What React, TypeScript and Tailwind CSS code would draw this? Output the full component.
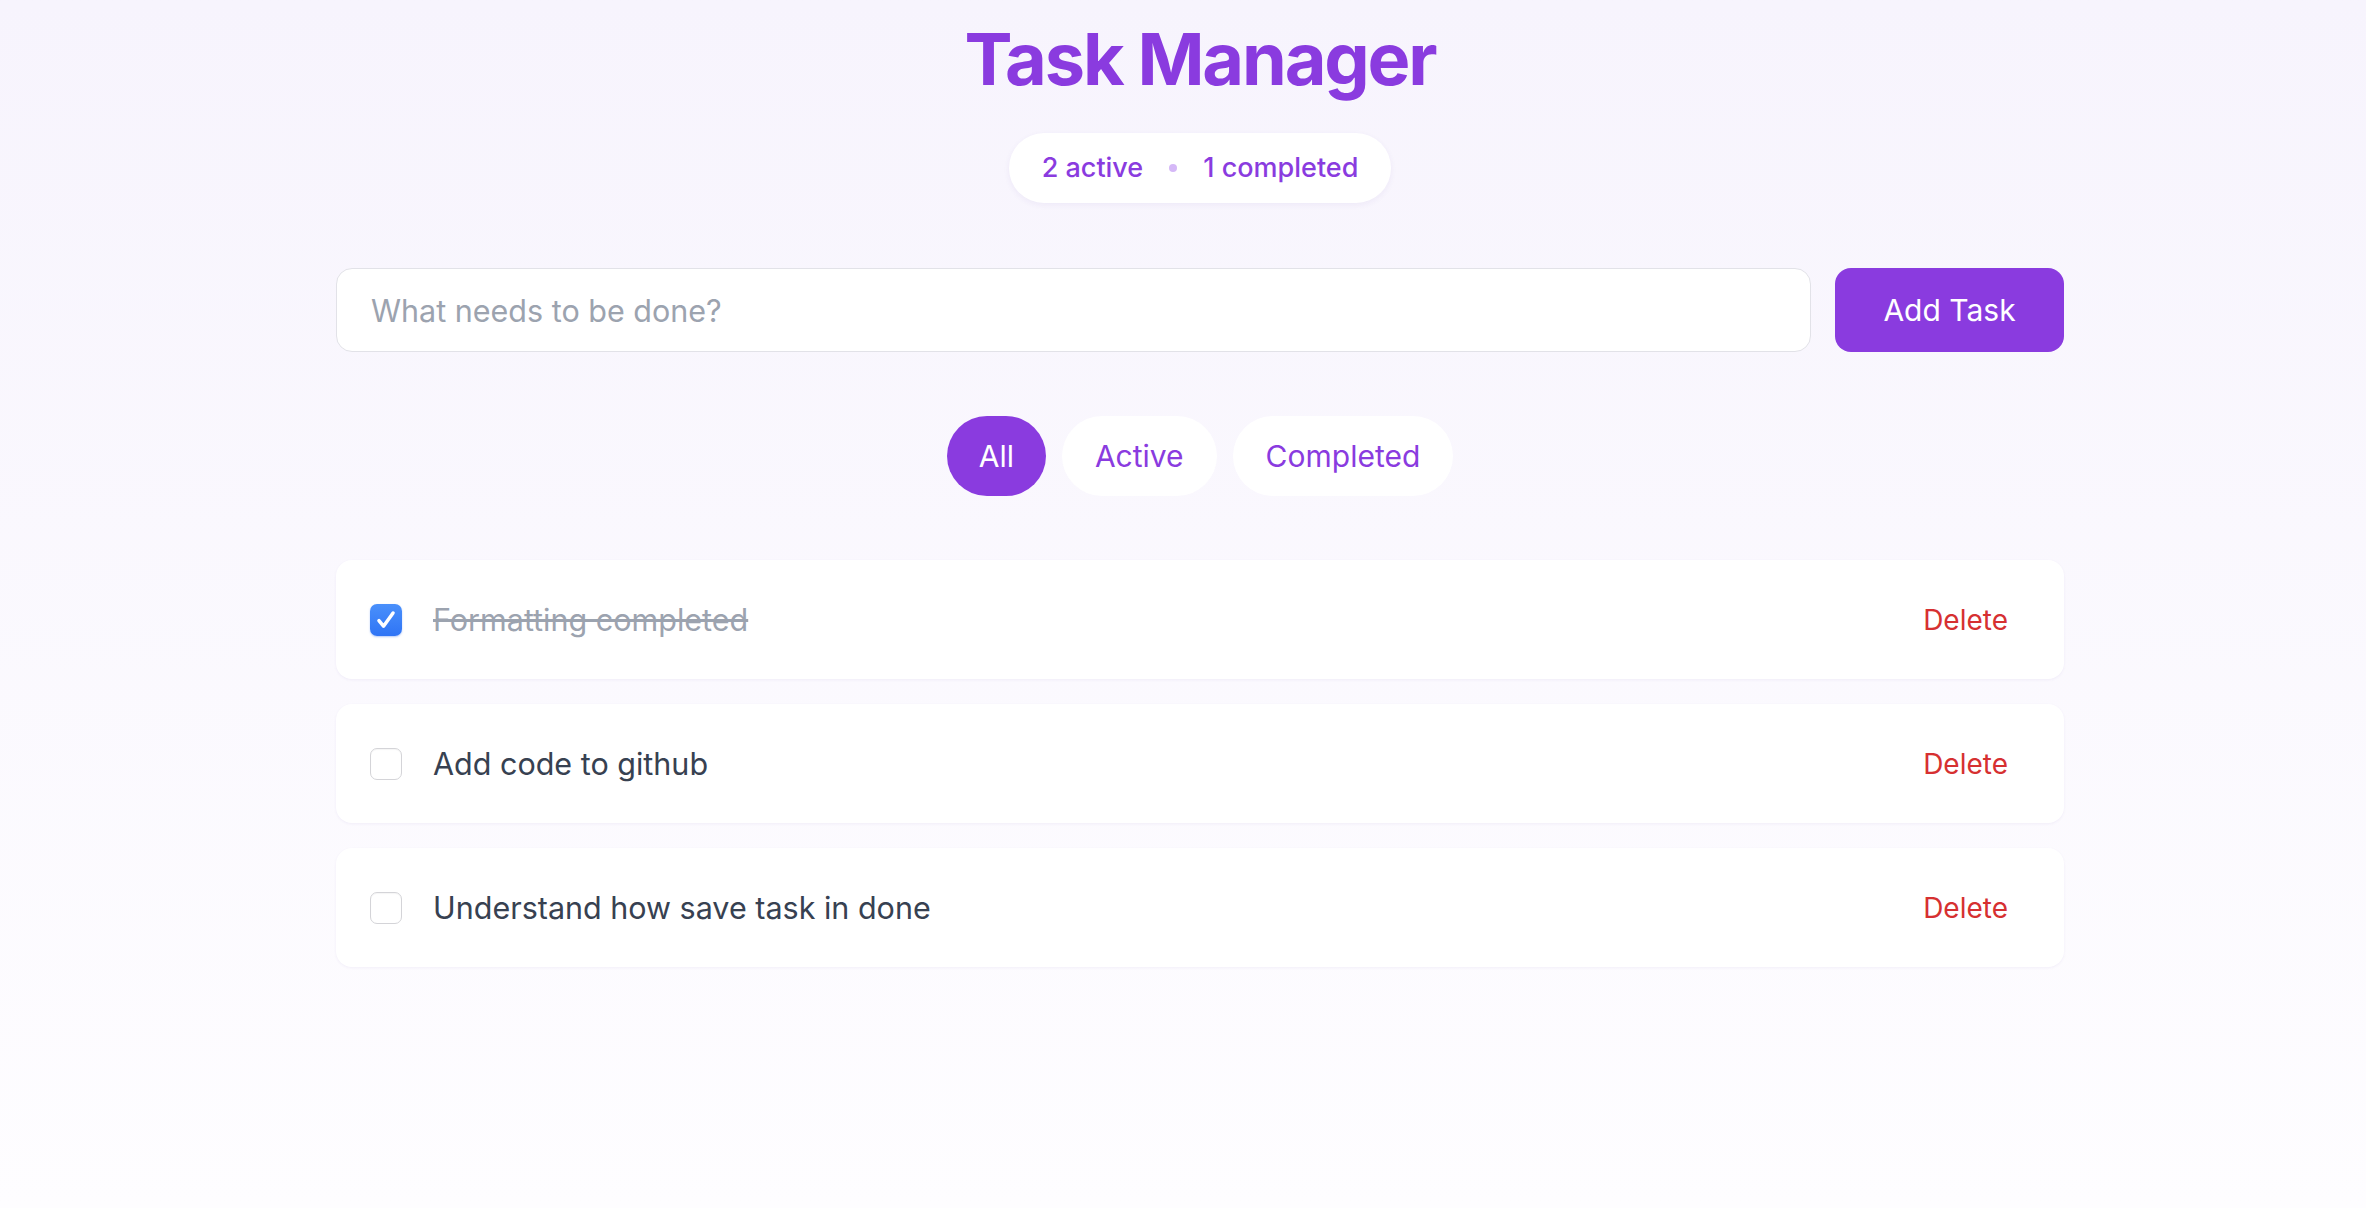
import { useState } from 'react';

type Task = {
  id: number;
  title: string;
  done: boolean;
};

type Filter = 'All' | 'Active' | 'Completed';

const initialTasks: Task[] = [
  { id: 1, title: 'Formatting completed', done: true },
  { id: 2, title: 'Add code to github', done: false },
  { id: 3, title: 'Understand how save task in done', done: false },
];

function Checkbox({ checked, onToggle }: { checked: boolean; onToggle: () => void }) {
  if (checked) {
    return (
      <button
        onClick={onToggle}
        className="flex h-[32px] w-[32px] shrink-0 items-center justify-center rounded-[7px] bg-linear-to-b from-[#4a90fb] to-[#2f74f5] shadow-[0_1px_2px_rgba(37,99,235,0.35)]"
      >
        <svg width="26" height="26" viewBox="0 0 24 24" fill="none">
          <path
            d="M5.5 12.5l4.2 5.2L18.5 5.5"
            stroke="white"
            strokeWidth="3.2"
            strokeLinecap="round"
            strokeLinejoin="round"
          />
        </svg>
      </button>
    );
  }
  return (
    <button
      onClick={onToggle}
      className="h-[32px] w-[32px] shrink-0 rounded-[7px] border border-[#d4d4d8] bg-white shadow-[inset_0_1px_1px_rgba(0,0,0,0.04)]"
    />
  );
}

function TaskItem({
  task,
  onToggle,
  onDelete,
}: {
  task: Task;
  onToggle: () => void;
  onDelete: () => void;
}) {
  return (
    <li className="flex h-[119px] items-center rounded-2xl bg-white pl-[34px] pr-[56px] shadow-[0_1px_3px_rgba(76,29,149,0.06)]">
      <Checkbox checked={task.done} onToggle={onToggle} />
      <span
        className={
          task.done
            ? 'ml-[31px] flex-1 text-[30.5px] text-[#9ca3af] line-through'
            : 'ml-[31px] flex-1 text-[30.5px] text-[#374151]'
        }
      >
        {task.title}
      </span>
      <button onClick={onDelete} className="text-[28px] text-[#d63031]">
        Delete
      </button>
    </li>
  );
}

export default function App() {
  const [tasks, setTasks] = useState<Task[]>(initialTasks);
  const [filter, setFilter] = useState<Filter>('All');
  const [text, setText] = useState('');

  const active = tasks.filter((t) => !t.done).length;
  const completed = tasks.length - active;

  const visible = tasks.filter((t) =>
    filter === 'All' ? true : filter === 'Active' ? !t.done : t.done
  );

  const addTask = () => {
    if (!text.trim()) return;
    setTasks([...tasks, { id: Date.now(), title: text.trim(), done: false }]);
    setText('');
  };

  return (
    <div className="min-h-screen bg-linear-to-b from-[#f7f4fd] to-[#fefdff] pl-[34px] font-['Inter',sans-serif]">
      <div className="mx-auto flex w-[1728px] flex-col items-center pt-[23px]">
        <h1 className="text-[72px] leading-none font-bold tracking-[-0.03em] text-[#8a3bdf]">
          Task Manager
        </h1>

        <div className="mt-[38px] flex h-[70px] items-center gap-[26px] rounded-full bg-white px-[33px] text-[27px] font-medium text-[#8a3bdf] shadow-[0_2px_6px_rgba(76,29,149,0.06)]">
          <span>{active} active</span>
          <span className="h-[8px] w-[8px] rounded-full bg-[#d5b8f7]" />
          <span>{completed} completed</span>
        </div>

        <div className="mt-[65px] flex w-full gap-[24px]">
          <input
            value={text}
            onChange={(e) => setText(e.target.value)}
            onKeyDown={(e) => e.key === 'Enter' && addTask()}
            placeholder="What needs to be done?"
            className="h-[84px] flex-1 rounded-2xl border border-[#e2e2e8] bg-white px-[34px] text-[30.5px] text-[#374151] outline-none placeholder:text-[#9ca3af]"
          />
          <button
            onClick={addTask}
            className="h-[84px] w-[229px] rounded-2xl bg-[#8a3bdf] text-[30px] text-white"
          >
            Add Task
          </button>
        </div>

        <div className="mt-[64px] flex gap-[16px]">
          {(['All', 'Active', 'Completed'] as Filter[]).map((f) => (
            <button
              key={f}
              onClick={() => setFilter(f)}
              className={
                filter === f
                  ? 'h-[80px] rounded-full bg-[#8a3bdf] px-[32px] text-[30px] text-white'
                  : 'h-[80px] rounded-full bg-white px-[33px] text-[30px] text-[#8a3bdf]'
              }
            >
              {f}
            </button>
          ))}
        </div>

        <ul className="mt-[64px] flex w-full flex-col gap-[25px]">
          {visible.map((task) => (
            <TaskItem
              key={task.id}
              task={task}
              onToggle={() =>
                setTasks(tasks.map((t) => (t.id === task.id ? { ...t, done: !t.done } : t)))
              }
              onDelete={() => setTasks(tasks.filter((t) => t.id !== task.id))}
            />
          ))}
        </ul>
      </div>
    </div>
  );
}
